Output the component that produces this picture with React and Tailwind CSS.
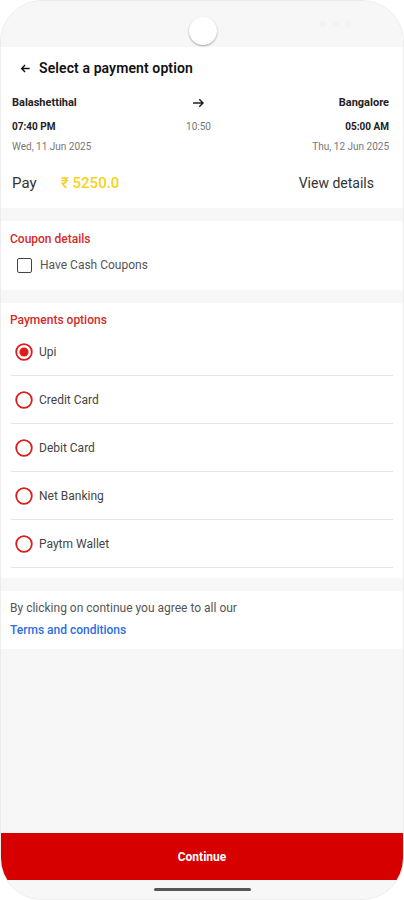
import React from "react";

function Radio({ checked }) {
  return (
    <svg width="18" height="18" viewBox="0 0 18 18" className="shrink-0">
      <circle cx="9" cy="9" r="7.8" fill="none" stroke="#e01b1b" strokeWidth="1.8" />
      {checked && <circle cx="9" cy="9" r="4.6" fill="#e01b1b" />}
    </svg>
  );
}

const options = ["Upi", "Credit Card", "Debit Card", "Net Banking", "Paytm Wallet"];

export default function App() {
  return (
    <div className="w-[404px] h-[900px] bg-white overflow-hidden" style={{ fontFamily: "Roboto, 'Noto Sans', sans-serif" }}>
      <div className="h-full rounded-[42px] bg-[#f7f7f7] flex flex-col overflow-hidden border border-[#ececec]">
        {/* status bar */}
        <div className="h-[46px] relative shrink-0 bg-[#f7f7f7]">
          <div className="absolute left-[188px] top-[16px] w-[28px] h-[28px] rounded-full bg-white shadow-[0_1px_2px_rgba(0,0,0,0.35)]" />
          <div className="absolute right-[52px] top-[19px] flex gap-[5px] items-center opacity-40">
            <div className="w-[8px] h-[6px] bg-[#eeeeee] rounded-sm" />
            <div className="w-[8px] h-[6px] bg-[#eeeeee] rounded-sm" />
            <div className="w-[6px] h-[8px] bg-[#eeeeee] rounded-sm" />
          </div>
        </div>

        {/* header + trip */}
        <div className="bg-white shrink-0 h-[161px] flex flex-col">
          <div className="h-[43px] flex items-center pl-[19px] gap-[8px]">
            <svg width="11" height="11" viewBox="0 0 12 12">
              <path d="M10.5 6H2M5.5 2.3L1.8 6l3.7 3.7" fill="none" stroke="#111" strokeWidth="1.5" />
            </svg>
            <span className="text-[14px] font-semibold text-[#111] tracking-[0.1px]">Select a payment option</span>
          </div>
          <div className="px-[11px] pr-[14px] mt-[4px]">
            <div className="flex items-center justify-between h-[18px]">
              <span className="text-[11px] font-bold text-[#222] w-[120px]">Balashettihal</span>
              <svg width="13" height="12" viewBox="0 0 13 12" className="mr-[4px]">
                <path d="M1 6h10M7.3 2.2L11 6l-3.7 3.8" fill="none" stroke="#222" strokeWidth="1.5" />
              </svg>
              <span className="text-[11px] font-bold text-[#222] w-[120px] text-right">Bangalore</span>
            </div>
            <div className="flex items-center justify-between h-[18px] mt-[5px]">
              <span className="text-[10px] font-bold text-[#222] w-[120px]">07:40 PM</span>
              <span className="text-[10px] text-[#777] mr-[4px]">10:50</span>
              <span className="text-[10px] font-bold text-[#222] w-[120px] text-right">05:00 AM</span>
            </div>
            <div className="flex items-center justify-between h-[18px] mt-[2px]">
              <span className="text-[10px] text-[#777]">Wed, 11 Jun 2025</span>
              <span className="text-[10px] text-[#777]">Thu, 12 Jun 2025</span>
            </div>
          </div>
          <div className="flex items-center h-[30px] mt-[13px] pl-[11px] pr-[29px]">
            <span className="text-[15px] text-[#333] w-[49px]">Pay</span>
            <span className="text-[15px] font-medium text-[#f5d31c]">₹ 5250.0</span>
            <span className="ml-auto text-[14px] text-[#333]">View details</span>
          </div>
        </div>

        <div className="h-[13px] shrink-0" />

        {/* coupon */}
        <div className="bg-white h-[69px] shrink-0 pl-[9px] pt-[9px]">
          <div className="text-[12px] font-medium text-[#d42a2a]">Coupon details</div>
          <div className="flex items-center mt-[8px] pl-[7px] gap-[8px]">
            <div className="w-[15px] h-[15px] border-[1.5px] border-[#444] rounded-[2px]" />
            <span className="text-[12px] text-[#555]">Have Cash Coupons</span>
          </div>
        </div>

        <div className="h-[13px] shrink-0" />

        {/* payments */}
        <div className="bg-white shrink-0 h-[275px] pt-[8px]">
          <div className="text-[12px] font-medium text-[#d42a2a] pl-[9px] h-[16px]">Payments options</div>
          <div className="mx-[10px] mt-[1px]">
            {options.map((o, i) => (
              <div key={o} className="h-[48px] flex items-center gap-[6px] pl-[4px] border-b border-[#e4e4e4]">
                <Radio checked={i === 0} />
                <span className="text-[12px] text-[#444]">{o}</span>
              </div>
            ))}
          </div>
        </div>

        <div className="h-[13px] shrink-0" />

        {/* terms */}
        <div className="bg-white shrink-0 h-[58px] pl-[9px] pt-[9px]">
          <div className="text-[12px] text-[#555] leading-[17px]">By clicking on continue you agree to all our</div>
          <div className="text-[12px] font-medium text-[#2d6fe0] leading-[17px] mt-[5px]">Terms and conditions</div>
        </div>

        <div className="flex-1 bg-[#f7f7f7]" />

        {/* continue */}
        <div className="h-[47px] bg-[#d70000] shrink-0 flex items-center justify-center">
          <span className="text-[12px] font-bold text-white">Continue</span>
        </div>
        <div className="h-[19px] shrink-0 bg-[#f7f7f7] flex items-center justify-center">
          <div className="w-[97px] h-[3px] rounded-full bg-[#555]" />
        </div>
      </div>
    </div>
  );
}
